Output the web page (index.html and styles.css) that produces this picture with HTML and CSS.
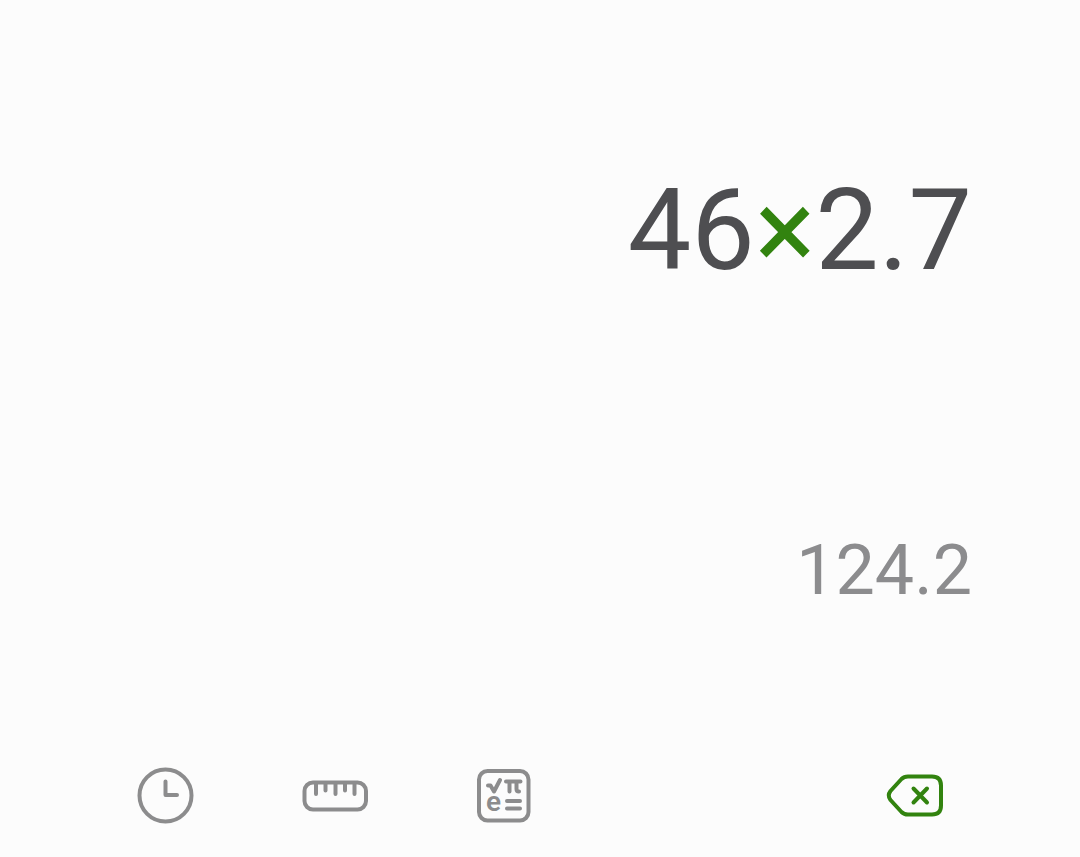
FILE: index.html
```html
<!DOCTYPE html>
<html lang="en">
<head>
<meta charset="utf-8">
<meta name="viewport" content="width=device-width, initial-scale=1">
<title>Calculator</title>
<link rel="stylesheet" href="styles.css">
</head>
<body>
<main class="calculator">
  <section class="display">
    <div class="expression">46<span class="operator">×</span>2.7</div>
    <output class="result">124.2</output>
  </section>
  <nav class="toolbar" aria-label="Calculator tools">
    <button class="tool" type="button" aria-label="History">
      <svg class="icon" viewBox="0 0 80 80" aria-hidden="true">
        <circle cx="40.5" cy="40.5" r="26"/>
        <path d="M40.5 26.5V40H52"/>
      </svg>
    </button>
    <button class="tool" type="button" aria-label="Unit converter">
      <svg class="icon" viewBox="0 0 80 80" aria-hidden="true">
        <rect x="9.500" y="27.500" width="61.500" height="27" rx="8.500"/>
        <path d="M21 28V39M30.500 28V35.500M40.500 28V39M50 28V35.500M59.500 28V39"/>
      </svg>
    </button>
    <button class="tool" type="button" aria-label="Scientific mode">
      <svg class="icon" viewBox="0 0 80 80" aria-hidden="true">
        <rect x="14" y="16" width="49.500" height="49.500" rx="8.500"/>
        <path d="M23 30.500H25.500L29 36.500L35 25M41 26.500H55.500M44.500 27V36.500M51.500 27V34Q51.500 36.500 54 36.500M42 46H55M42 53.500H55"/>
        <text class="icon-letter" x="21" y="56">e</text>
      </svg>
    </button>
    <button class="tool tool-delete" type="button" aria-label="Backspace">
      <svg class="icon" viewBox="0 0 80 80" aria-hidden="true">
        <path d="M33 21.500H57Q66 21.500 66 30.500V50.500Q66 59.500 57 59.500H33Q29 59.500 26.500 57L15.500 45Q12 40.500 15.500 36L26.500 24Q29 21.500 33 21.500Z"/>
        <path d="M38.500 33.500L52 47.500M52 33.500L38.500 47.500"/>
      </svg>
    </button>
  </nav>
</main>
</body>
</html>
```
FILE: styles.css
```css
* {
  box-sizing: border-box;
}

body {
  margin: 0;
  background: #fcfcfc;
  font-family: Roboto, "Liberation Sans", sans-serif;
}

.calculator {
  display: flex;
  flex-direction: column;
  min-height: 100vh;
  padding-bottom: 22px;
}

.display {
  display: flex;
  flex: 1;
  flex-direction: column;
  align-items: flex-end;
  padding: 161px 108px 0;
}

.expression {
  color: #4e4e51;
  font-size: 113px;
  line-height: 140px;
}

.operator {
  color: #32830f;
}

.result {
  margin-top: 224px;
  color: #8c8c8e;
  font-size: 70px;
  line-height: 90px;
}

.toolbar {
  display: flex;
  gap: 90px;
  padding: 0 125px;
}

.tool {
  display: block;
  width: 80px;
  height: 80px;
  padding: 0;
  border: 0;
  background: none;
  color: #8c8c8d;
}

.tool-delete {
  margin-left: auto;
  color: #32830f;
}

.icon {
  display: block;
  width: 100%;
  height: 100%;
  fill: none;
  stroke: currentColor;
  stroke-width: 4;
  stroke-linecap: round;
  stroke-linejoin: round;
}

.icon-letter {
  fill: currentColor;
  stroke: none;
  font-family: Roboto, sans-serif;
  font-size: 28px;
  font-weight: 600;
}
```
